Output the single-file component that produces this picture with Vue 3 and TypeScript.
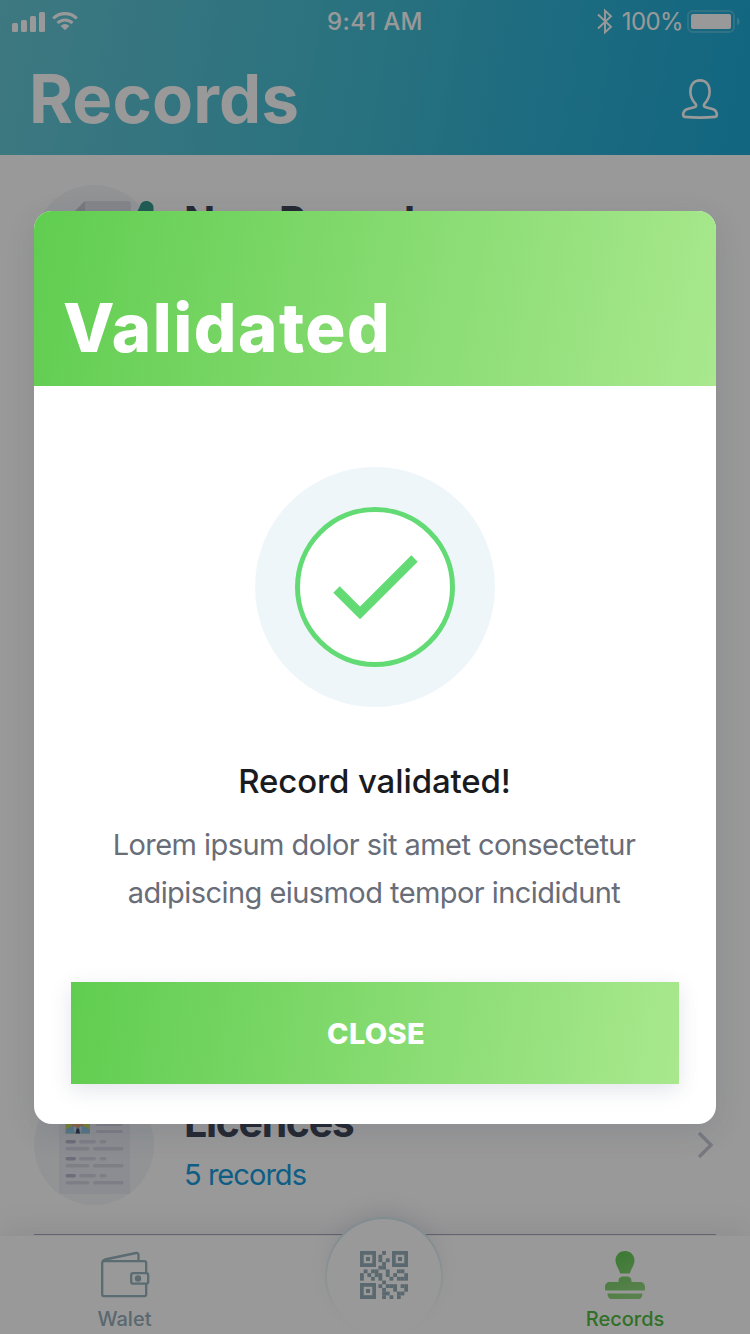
<script setup lang="ts">
const modules: string[] = [
  '......X......',
  '.....X.......',
  '.....X.X.....',
  '......X......',
  '.....XX......',
  '.X.XX..X..XX.',
  'X.X.XX.X.X..X',
  'X..X.X..X.XXX',
  '......X......',
  '.....X.XXX.XX',
  '......X..X..X',
  '......XX..XX.',
  '......X.X.X..',
]
const unit = 48 / 13
const cells = modules.flatMap((row, y) =>
  [...row].flatMap((c, x) => (c === 'X' ? [{ x: x * unit, y: y * unit }] : [])),
)
const finders = [
  { x: 0, y: 0 },
  { x: 32, y: 0 },
  { x: 0, y: 32 },
]
const bars = [9, 12, 16, 20]
const lines = [55, 72, 89]
</script>

<template>
  <div class="screen">
    <header class="header">
      <div class="status">
        <div class="side">
          <svg width="33" height="20" viewBox="0 0 33 20" fill="#fff">
            <rect v-for="(h, i) in bars" :key="h" :x="i * 9" :y="20 - h" width="6" :height="h" rx="1.5" />
          </svg>
          <svg class="wifi" width="26" height="19" viewBox="0 0 26 19" fill="none" stroke="#fff">
            <path d="M1.2 6.5a16.7 16.7 0 0 1 23.6 0" stroke-width="3.1" />
            <path d="M5.5 11a10.6 10.6 0 0 1 15 0" stroke-width="3" />
            <path d="M13 18.2L8.6 13.9a6.3 6.3 0 0 1 8.8 0z" fill="#fff" stroke="none" />
          </svg>
        </div>
        <span class="time">9:41 AM</span>
        <div class="side right">
          <svg width="16" height="27" viewBox="0 0 16 27" fill="none" stroke="#fff" stroke-width="1.9">
            <path d="M1 6.5L14 18.7 8 24.4V2.6l6 5.7L1 20.5" />
          </svg>
          <span class="percent">100%</span>
          <svg width="53" height="24" viewBox="0 0 53 24">
            <rect x="1" y="1" width="46" height="21" rx="5" fill="none" stroke="#fff" stroke-opacity=".22" stroke-width="2" />
            <rect x="4" y="4" width="40" height="15" rx="2" fill="#fff" />
            <path d="M50 7.5c3.5 1.5 3.5 6.5 0 8z" fill="#fff" opacity=".3" />
          </svg>
        </div>
      </div>
      <div class="heading">
        <h1>Records</h1>
        <svg width="38" height="42" viewBox="0 0 38 42" fill="none" stroke="#fff" stroke-width="2.6" stroke-linejoin="round">
          <path d="M19 2.4c-6.3 0-9.6 4.8-9.6 11.2 0 5 2.2 9.2 4.8 11.9 1.7 1.8 1 3.2-1 3.7L6.600 31C3.300 32 2 34 2.200 37.300c.1 1 .7 1.500 1.700 1.600 8.500.8 21.700.8 30.200 0 1-.1 1.600-.6 1.700-1.600.2-3.300-1.100-5.300-4.400-6.300l-6.600-1.800c-2-.5-2.700-1.900-1-3.700 2.600-2.700 4.800-6.900 4.800-11.900C28.600 7.200 25.300 2.400 19 2.400z" />
        </svg>
      </div>
    </header>

    <main class="list">
      <section class="row">
        <div class="disc">
          <svg class="sheet" width="120" height="120" viewBox="0 0 120 120">
            <path d="M40 27L51 16H94a3 3 0 0 1 3 3V100H40z" fill="#dddfe6" />
            <path d="M40 27L51 16V27z" fill="#c8cad4" />
            <path d="M103 90V27L105.5 22a7 7 0 0 1 14 2V30L110 90z" fill="#379b8d" />
          </svg>
        </div>
        <div class="info"><h2 class="new">New Record</h2></div>
      </section>
      <section class="row last">
        <div class="disc">
          <svg width="120" height="120" viewBox="0 0 120 120">
            <rect x="25" y="18" width="71" height="91" fill="#eaecf3" />
            <rect x="31.5" y="26" width="24.5" height="22.5" rx="1" fill="#c6d85a" />
            <rect x="37.5" y="28" width="12" height="15" rx="4" fill="#eda266" />
            <path d="M31.5 48.5V46q1-3 6.5-4.500l3-1 2.800 3 2.800-3 3 1q5.500 1.500 6.400 4.500v2.500z" fill="#91c5e6" />
            <path d="M40.500 41l3.300 3.500 3.200-3.500 1 3-2 4.500h-4.500l-2-4.500z" fill="#cfdbe8" />
            <path d="M42.500 43.500h2.600l.9 5h-4.400z" fill="#3b4560" />
            <rect x="62" y="38" width="27" height="3" rx="1.5" fill="#d0d2e0" />
            <rect x="62" y="45" width="27" height="3" rx="1.5" fill="#d0d2e0" />
            <g v-for="y in lines" :key="y" :transform="`translate(0 ${y})`" fill="#d0d2e0">
              <rect x="31.5" width="10.5" height="3.4" rx="1.7" fill="#b5b8cc" />
              <rect x="45" width="17" height="3.4" rx="1.7" />
              <rect x="65.5" width="7" height="3.4" rx="1.7" />
              <rect x="31.5" y="7" width="24" height="3.4" rx="1.7" />
              <rect x="59" y="7" width="30.5" height="3.4" rx="1.7" />
            </g>
          </svg>
        </div>
        <div class="info">
          <h2>Licences</h2>
          <p>5 records</p>
        </div>
        <svg class="chevron" width="20" height="30" viewBox="0 0 20 30" fill="none" stroke="#c9cad6" stroke-width="3.4">
          <path d="M3 3L15 15 3 27" />
        </svg>
      </section>
    </main>

    <nav class="tabs">
      <div class="tab wallet">
        <svg width="50" height="48" viewBox="0 0 50 48" fill="none" stroke="#96b2be" stroke-width="2.3" stroke-linejoin="round">
          <rect x="2.2" y="10.2" width="44" height="35" rx="2" />
          <path d="M2.5 10.500Q3 9 5 8.500L36 2q2.500-.4 2.500 2v6" />
          <rect x="31.2" y="22.2" width="17" height="10.5" rx="2" fill="#fff" />
          <circle cx="38" cy="27.5" r="3.2" fill="#96b2be" stroke="none" />
        </svg>
        <span>Walet</span>
      </div>
      <div class="scan">
        <svg width="48" height="48" viewBox="0 0 48 48" fill="#96adb9">
          <g v-for="f in finders" :key="`${f.x}-${f.y}`" :transform="`translate(${f.x} ${f.y})`">
            <path fill-rule="evenodd" d="M0 0H16V16H0zM3.7 3.7V12.3H12.3V3.7z" />
            <rect x="6" y="6" width="4" height="4" />
          </g>
          <rect v-for="(c, i) in cells" :key="i" :x="c.x" :y="c.y" width="3.8" height="3.8" />
        </svg>
      </div>
      <div class="tab records">
        <svg width="40" height="48" viewBox="0 0 40 48">
          <defs>
            <linearGradient id="stamp" x1="0" y1="0" x2=".4" y2="1">
              <stop offset="0" stop-color="#5ec952" />
              <stop offset="1" stop-color="#94d880" />
            </linearGradient>
          </defs>
          <path fill="url(#stamp)" d="M20 0c5.500 0 9.500 4.200 9.500 9.500 0 4.500-3 7.500-4.700 13H15.200C13.500 17 10.500 14 10.500 9.500 10.500 4.200 14.500 0 20 0zM13.500 31v-1c0-3 2-4.500 4-4.500h5c2 0 4 1.500 4 4.500v1H35c3 0 5 2 5 5v2.500q0 1-1 1H1q-1 0-1-1V36c0-3 2-5 5-5zM2.500 42.500h35c0 3.500-1.500 5.500-4 5.500h-27c-2.500 0-4-2-4-5.500z" />
        </svg>
        <span>Records</span>
      </div>
    </nav>

    <div class="backdrop">
      <div class="dialog" role="dialog">
        <div class="banner">Validated</div>
        <div class="content">
          <svg width="240" height="240" viewBox="0 0 240 240">
            <circle cx="120" cy="120" r="120" fill="#eff6fa" />
            <circle cx="120" cy="120" r="77.5" fill="#fff" stroke="#62db75" stroke-width="5" />
            <path d="M81.500 122.500L105 146 159.500 91.500" fill="none" stroke="#62db75" stroke-width="9" />
          </svg>
          <h3>Record validated!</h3>
          <p class="first">Lorem ipsum dolor sit amet consectetur</p>
          <p class="second">adipiscing eiusmod tempor incididunt</p>
          <button type="button">CLOSE</button>
        </div>
      </div>
    </div>
  </div>
</template>

<style>
html, body { margin: 0; }
</style>

<style scoped>
* { box-sizing: border-box; }
h1, h2, h3, p { margin: 0; white-space: nowrap; }
.screen {
  position: relative;
  width: 750px;
  height: 1334px;
  display: flex;
  flex-direction: column;
  overflow: hidden;
  background: #fff;
  font-family: Inter, "Liberation Sans", sans-serif;
}
svg { display: block; flex: none; }
.header {
  height: 155px;
  flex: none;
  color: #fff;
  background: linear-gradient(100deg, #68c9d6 0%, #45bdd4 48%, #32b4d5 70%, #1eaad5 100%);
}
.status {
  height: 43px;
  display: grid;
  grid-template-columns: 1fr auto 1fr;
  align-items: center;
  padding: 0 10px 0 12px;
}
.side { display: flex; align-items: center; }
.side.right { justify-content: flex-end; }
.wifi { margin-left: 7px; }
.time { margin-left: -2px; font-size: 24px; font-weight: 500; letter-spacing: 0.45px; }
.percent { font-size: 24px; margin: 0 4px 0 9px; letter-spacing: -0.6px; }
.heading {
  display: flex;
  justify-content: space-between;
  padding: 16px 31px 0 29px;
}
.heading svg { margin-top: 19px; }
h1 { font-size: 67px; line-height: 80px; font-weight: 700; letter-spacing: 0.15px; }
.list {
  height: 1081px;
  flex: none;
  display: flex;
  flex-direction: column;
  justify-content: space-between;
  padding: 0 34px 1px;
}
.row { height: 180px; display: flex; align-items: center; }
.row.last { height: 180px; border-bottom: 1px solid #aeadc0; }
.disc { width: 120px; height: 120px; border-radius: 50%; background: #f2f6f8; }
.sheet { overflow: visible; }
.info { margin-left: 30px; flex: 1; }
h2 { font-size: 41px; line-height: 50px; font-weight: 700; color: #3f4658; letter-spacing: -1.3px; }
h2.new { margin-bottom: 48px; letter-spacing: -1.15px; }
.last .info { padding-top: 3px; }
.info p { margin-top: 8px; font-size: 29px; line-height: 40px; color: #189bdd; letter-spacing: -0.95px; }
.tabs {
  position: relative;
  height: 98px;
  flex: none;
  background: #fff;
  box-shadow: 0 -4px 30px rgba(70, 70, 110, 0.12);
  display: grid;
  grid-template-columns: 249px 270px 231px;
}
.tab {
  display: flex;
  flex-direction: column;
  align-items: center;
  font-size: 20px;
  font-weight: 500;
  line-height: 24px;
}
.tab svg { margin-top: 15px; }
.tab span { margin-top: 8px; }
.wallet { color: #96adb9; }
.records { color: #50bc42; padding-right: 19px; }
.scan {
  justify-self: center;
  width: 118px;
  height: 118px;
  margin-top: -19px;
  border: 2px solid transparent;
  border-radius: 50%;
  background: linear-gradient(#fff, #fff) padding-box, linear-gradient(#d5e8f0 0%, #eaf2f5 50%, #fff 90%) border-box;
  display: grid;
  place-items: center;
  padding-bottom: 3px;
  box-shadow: 0 -12px 24px -8px rgba(70, 80, 110, 0.14);
}
.backdrop {
  position: absolute;
  inset: 0;
  background: rgba(0, 0, 0, 0.4);
  padding: 211px 34px 0;
}
.dialog {
  height: 913px;
  border-radius: 18px;
  overflow: hidden;
  background: #fff;
  box-shadow: 0 8px 30px rgba(40, 50, 70, 0.12);
}
.banner {
  height: 175px;
  padding: 77px 29px 0;
  color: #fff;
  font-size: 67px;
  line-height: 80px;
  font-weight: 800;
  letter-spacing: 1.5px;
  background: linear-gradient(102deg, #60cd50 0%, #a9e88e 100%);
}
.content {
  display: flex;
  flex-direction: column;
  align-items: center;
  padding: 81px 37px 0;
}
h3 { margin-top: 54px; font-size: 33px; line-height: 40px; font-weight: 500; color: #1a1b1f; letter-spacing: -0.12px; padding-right: 1px; }
.content p { font-size: 29px; line-height: 48px; color: #686d78; letter-spacing: -0.56px; padding-right: 2px; }
.content .first { margin-top: 20px; }
button {
  width: 608px;
  height: 102px;
  margin-top: 65px;
  padding: 2px 0 0 2px;
  border: 0;
  color: #fff;
  font: 800 29px/34px Inter, "Liberation Sans", sans-serif;
  letter-spacing: 0.3px;
  background: linear-gradient(100deg, #60cd50 0%, #a9e88e 100%);
  box-shadow: 0 6px 20px rgba(60, 70, 110, 0.14);
}
</style>
